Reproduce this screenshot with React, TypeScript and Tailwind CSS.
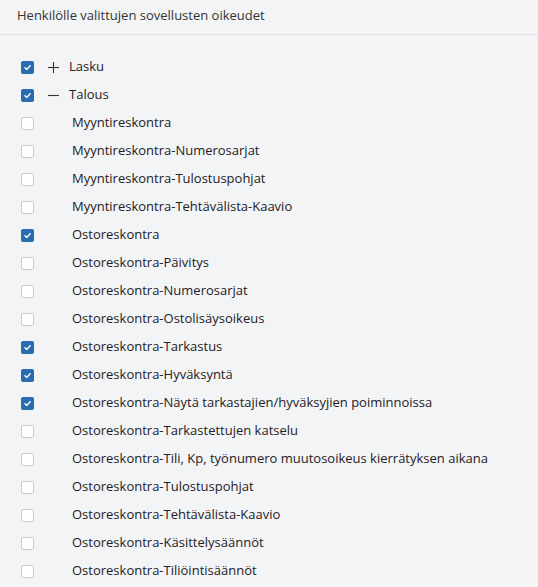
import React from "react";

type Item = { label: string; checked: boolean };

const groups: { label: string; checked: boolean; open: boolean; items: Item[] }[] = [
  { label: "Lasku", checked: true, open: false, items: [] },
  {
    label: "Talous",
    checked: true,
    open: true,
    items: [
      { label: "Myyntireskontra", checked: false },
      { label: "Myyntireskontra-Numerosarjat", checked: false },
      { label: "Myyntireskontra-Tulostuspohjat", checked: false },
      { label: "Myyntireskontra-Tehtävälista-Kaavio", checked: false },
      { label: "Ostoreskontra", checked: true },
      { label: "Ostoreskontra-Päivitys", checked: false },
      { label: "Ostoreskontra-Numerosarjat", checked: false },
      { label: "Ostoreskontra-Ostolisäysoikeus", checked: false },
      { label: "Ostoreskontra-Tarkastus", checked: true },
      { label: "Ostoreskontra-Hyväksyntä", checked: true },
      { label: "Ostoreskontra-Näytä tarkastajien/hyväksyjien poiminnoissa", checked: true },
      { label: "Ostoreskontra-Tarkastettujen katselu", checked: false },
      { label: "Ostoreskontra-Tili, Kp, työnumero muutosoikeus kierrätyksen aikana", checked: false },
      { label: "Ostoreskontra-Tulostuspohjat", checked: false },
      { label: "Ostoreskontra-Tehtävälista-Kaavio", checked: false },
      { label: "Ostoreskontra-Käsittelysäännöt", checked: false },
      { label: "Ostoreskontra-Tiliöintisäännöt", checked: false },
    ],
  },
];

function Box({ checked }: { checked: boolean }) {
  return checked ? (
    <span className="flex h-[13px] w-[13px] shrink-0 items-center justify-center rounded-[2px] bg-[#2b6cb0]">
      <svg width="9" height="9" viewBox="0 0 10 10">
        <path d="M2.2 5.2 L4.2 7.1 L7.9 3" fill="none" stroke="#fff" strokeWidth="1.6" strokeLinecap="round" strokeLinejoin="round" />
      </svg>
    </span>
  ) : (
    <span className="h-[13px] w-[13px] shrink-0 rounded-[2px] border border-[#c9cbcf] bg-white" />
  );
}

export default function App() {
  return (
    <div
      className="min-h-[587px] w-[538px] bg-[#f3f4f6] text-[13px] text-[#1e2124]"
      style={{ fontFamily: '"Open Sans", "Noto Sans", sans-serif' }}
    >
      <div className="flex h-[35px] items-center border-b border-[#dfe1e4] pl-[17px] pb-[3px] text-[#333]">
        Henkilölle valittujen sovellusten oikeudet
      </div>
      <div className="pt-[18px]">
        {groups.map((g) => (
          <div key={g.label}>
            <div className="flex h-[28px] items-center pl-[21px]">
              <Box checked={g.checked} />
              <span className="ml-[13px] flex w-[12px] items-center justify-center">
                <svg width="11" height="11" viewBox="0 0 11 11">
                  {!g.open && <path d="M5.5 0 V11" stroke="#333" strokeWidth="1.1" />}
                  <path d="M0 5.5 H11" stroke="#333" strokeWidth="1.1" />
                </svg>
              </span>
              <span className="ml-[10px]">{g.label}</span>
            </div>
            {g.open &&
              g.items.map((it) => (
                <div key={it.label} className="flex h-[28px] items-center pl-[21px]">
                  <Box checked={it.checked} />
                  <span className="ml-[38px]">{it.label}</span>
                </div>
              ))}
          </div>
        ))}
      </div>
    </div>
  );
}
